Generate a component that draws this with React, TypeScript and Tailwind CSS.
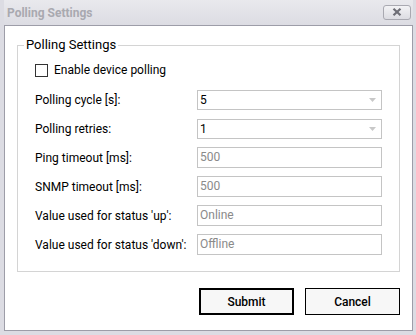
import React from "react";

const font = { fontFamily: "Roboto, 'Liberation Sans', sans-serif" };

function Row({ label, children }: { label: string; children: React.ReactNode }) {
  return (
    <div className="flex items-center h-[29px]">
      <div className="w-[162px] text-[12px] text-black leading-none whitespace-nowrap">{label}</div>
      {children}
    </div>
  );
}

function Select({ value }: { value: string }) {
  return (
    <div className="w-[185px] h-[20px] border border-[#c4c4c4] bg-white flex items-center justify-between pl-[2px] pr-[5px]">
      <span className="text-[12px] text-black leading-none">{value}</span>
      <svg width="7" height="4" viewBox="0 0 7 4">
        <path d="M0 0 L7 0 L3.5 4 Z" fill="#c8c8c8" />
      </svg>
    </div>
  );
}

function Input({ value }: { value: string }) {
  return (
    <div className="w-[185px] h-[21px] border border-[#c4c4c4] bg-white flex items-center pl-[2px]">
      <span className="text-[12px] text-[#8a8a8a] leading-none -mt-[2px]">{value}</span>
    </div>
  );
}

export default function App() {
  return (
    <div
      className="w-[416px] h-[335px] bg-[#dcdce3] flex flex-col pl-[4px] pr-[3px] pb-[4px]"
      style={font}
    >
      <div className="h-[25px] flex items-center justify-between pl-[3px] pr-[2px] bg-gradient-to-b from-[#e9e9ed] to-[#dcdce3]">
        <span className="text-[12px] font-bold text-[#a9a9b0]">Polling Settings</span>
        <div className="w-[28px] h-[15px] -mt-[1px] rounded-[3px] border border-[#a9a9b1] bg-gradient-to-b from-[#f3f3f5] to-[#dcdce2] flex items-center justify-center">
          <svg width="10" height="8" viewBox="0 0 10 8">
            <path d="M1.5 0.8 L8.5 7.2 M8.5 0.8 L1.5 7.2" stroke="#6e6e76" strokeWidth="2.2" />
          </svg>
        </div>
      </div>
      <div className="flex-1 border border-[#9d9da8] bg-white flex flex-col pl-[12px] pr-[12px] pt-[11px]">
        <fieldset className="border border-[#d4d4d4] h-[235px] pl-[17px] pr-[17px]">
          <legend className="-ml-[11px] px-[2px] text-[13px] text-black leading-[16px]">Polling Settings</legend>
          <div className="flex items-center h-[22px] mt-[6px]">
            <div className="w-[13px] h-[13px] border border-[#333] bg-white" />
            <span className="ml-[6px] text-[12px] text-black leading-none">Enable device polling</span>
          </div>
          <div className="mt-[4px]">
            <Row label="Polling cycle [s]:"><Select value="5" /></Row>
            <Row label="Polling retries:"><Select value="1" /></Row>
            <Row label="Ping timeout [ms]:"><Input value="500" /></Row>
            <Row label="SNMP timeout [ms]:"><Input value="500" /></Row>
            <Row label="Value used for status 'up':"><Input value="Online" /></Row>
            <Row label="Value used for status 'down':"><Input value="Offline" /></Row>
          </div>
        </fieldset>
        <div className="flex justify-end gap-[11px] mt-[16px]">
          <button className="w-[95px] h-[27px] border-2 border-black bg-[#f7f7f7] text-[12px] font-medium text-black">Submit</button>
          <button className="w-[95px] h-[27px] border border-black bg-[#f7f7f7] text-[12px] font-medium text-black">Cancel</button>
        </div>
      </div>
    </div>
  );
}
